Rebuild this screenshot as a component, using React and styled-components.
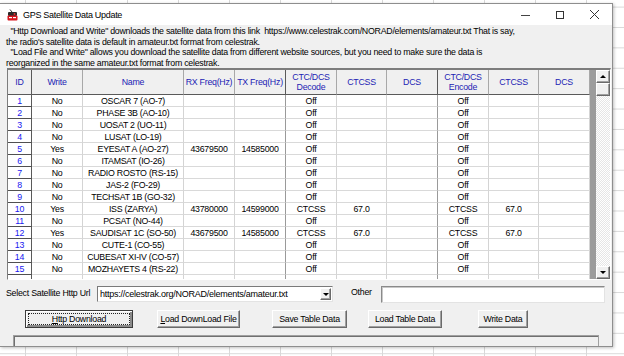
import React from 'react';
import styled, { createGlobalStyle, css } from 'styled-components';

const Global = createGlobalStyle`
  html, body { margin: 0; padding: 0; overflow: hidden; background: #fff; }
  * { box-sizing: border-box; }
`;

const FONT = `"Liberation Sans", Arial, sans-serif`;

const Desktop = styled.div`
  width: 624px;
  height: 356px;
  overflow: hidden;
  padding-top: 3px;
  background-color: #fff;
  background-image:
    linear-gradient(to right, #d9d9d9 1px, transparent 1px),
    linear-gradient(to bottom, #d9d9d9 1px, transparent 1px);
  background-size: 51px 100%, 100% 20.4px;
  background-position: 25px 0, 0 6.6px;
  font-family: ${FONT};
`;

const Window = styled.div`
  width: 613px;
  height: 344px;
  border: 1px solid #8e8e8e;
  border-left: none;
  background: #f0f0f0;
  display: flex;
  flex-direction: column;
  overflow: hidden;
  box-shadow: 1px 1px 3px rgba(0, 0, 0, 0.25);
`;

const TitleBar = styled.div`
  height: 21px;
  flex: none;
  background: #fff;
  display: flex;
  align-items: center;
  padding-left: 7px;
`;

const TitleText = styled.span`
  font-size: 9px;
  letter-spacing: -0.3px;
  color: #000;
  margin-left: 5px;
`;

const Captions = styled.div`
  margin-left: auto;
  display: flex;
  height: 100%;
`;

const CaptionBtn = styled.div`
  width: 34.5px;
  height: 100%;
  display: flex;
  align-items: center;
  justify-content: center;
`;

const Body = styled.div`
  flex: 1;
  display: flex;
  flex-direction: column;
`;

const Description = styled.div`
  padding: 1px 0 0 6px;
  font-size: 8.8px;
  letter-spacing: -0.25px;
  line-height: 10.5px;
  white-space: pre;
  color: #000;
  height: 43px;
`;

const GridFrame = styled.div`
  margin-left: 7px;
  width: 604px;
  height: 212px;
  border-top: 2px solid #7d7d7d;
  border-left: 1px solid #7d7d7d;
  border-right: 1px solid #fff;
  border-bottom: 1px solid #fff;
  display: flex;
`;

const Cells = styled.div`
  width: 582px;
  height: 100%;
  overflow: hidden;
  background: #fff;
  display: grid;
  grid-template-columns: ${(p) => p.$cols};
  grid-template-rows: 25px;
  grid-auto-rows: 12px;
  align-content: start;
`;

const Cell = styled.div`
  display: flex;
  align-items: center;
  justify-content: center;
  text-align: center;
  white-space: pre;
  overflow: hidden;
  font-size: 8.8px;
  letter-spacing: -0.25px;
  color: #000;
  background: #fff;
  border-right: 1px solid ${(p) => (p.$dark ? '#9a9a9a' : '#d4d4d4')};
  border-bottom: 1px solid #d9d9d9;
  ${(p) =>
    p.$head &&
    css`
      background: #f0f0f0;
      color: #2323b4;
      line-height: 10px;
      border-right: 1px solid ${p.$dark ? '#5a5a5a' : '#a8a8a8'};
      border-bottom: 1px solid #5a5a5a;
    `}
  ${(p) =>
    p.$id &&
    css`
      color: #1818f0;
      border-right: 1px solid #5a5a5a;
      border-bottom: 1px solid #505050;
    `}
`;

const Workspace = styled.div`
  width: 6px;
  height: 100%;
  background: #9c9c9c;
`;

const ScrollBar = styled.div`
  width: 14px;
  height: 100%;
  display: flex;
  flex-direction: column;
`;

const raised = css`
  background: #f0f0f0;
  border: 1px solid;
  border-color: #fff #6a6a6a #6a6a6a #fff;
  box-shadow: inset -1px -1px #a0a0a0;
`;

const ScrollBtn = styled.div`
  ${raised};
  height: 13px;
  flex: none;
  display: flex;
  align-items: center;
  justify-content: center;
`;

const Thumb = styled.div`
  ${raised};
  height: 13px;
  flex: none;
`;

const Track = styled.div`
  flex: 1;
  background-color: #fff;
  background-image: repeating-conic-gradient(#e6e6e6 0 25%, #fff 0 50%);
  background-size: 2px 2px;
`;

const Arrow = styled.div`
  width: 0;
  height: 0;
  border-left: 3px solid transparent;
  border-right: 3px solid transparent;
  ${(p) =>
    p.$up
      ? css`border-bottom: 3px solid #000;`
      : css`border-top: 3px solid #000;`}
`;

const UrlRow = styled.div`
  margin-top: 6px;
  height: 17px;
  display: flex;
  align-items: flex-start;
  padding-left: 6px;
`;

const Label = styled.div`
  width: ${(p) => p.$w}px;
  margin-left: ${(p) => p.$ml || 0}px;
  font-size: 8.8px;
  letter-spacing: -0.25px;
  line-height: 12px;
  margin-top: ${(p) => p.$mt || 0}px;
  color: #000;
  white-space: nowrap;
`;

const Combo = styled.div`
  width: 236px;
  height: 16px;
  background: #fff;
  border: 1px solid;
  border-color: #7a7a7a #e3e3e3 #e3e3e3 #7a7a7a;
  display: flex;
  align-items: center;
  padding: 1px 1px 1px 2px;
`;

const ComboText = styled.span`
  flex: 1;
  font-size: 9px;
  letter-spacing: -0.25px;
  color: #000;
  white-space: nowrap;
`;

const ComboBtn = styled.div`
  ${raised};
  width: 11px;
  height: 12px;
  display: flex;
  align-items: center;
  justify-content: center;
`;

const TextBox = styled.div`
  width: 224px;
  height: 17px;
  background: #fff;
  border: 1px solid;
  border-color: #8a8a8a #e3e3e3 #e3e3e3 #8a8a8a;
  box-shadow: inset 1px 1px #c8c8c8;
`;

const ButtonRow = styled.div`
  margin-top: 7px;
  height: 18px;
  display: flex;
  padding-left: 25px;
`;

const Button = styled.div`
  position: relative;
  width: ${(p) => p.$w}px;
  height: 18px;
  margin-left: ${(p) => p.$ml || 0}px;
  ${raised};
  display: flex;
  align-items: center;
  justify-content: center;
  font-size: 8.8px;
  letter-spacing: -0.25px;
  color: #000;
  white-space: nowrap;
  ${(p) =>
    p.$default &&
    css`
      border-color: #3c3c3c;
      box-shadow: inset 1px 1px #fff, inset -2px -2px #8a8a8a;
      &::after {
        content: '';
        position: absolute;
        inset: 2px;
        border: 1px dotted #222;
      }
    `}
  u { text-decoration: underline; text-underline-offset: 1px; }
`;

const Progress = styled.div`
  margin-top: 7px;
  margin-left: 13px;
  width: 586px;
  height: 20px;
  flex: none;
  border: 1px solid #a0a0a0;
  box-shadow: inset 1px 1px #707070;
`;

const cols = [
  { w: 24, h: 'ID', dark: true },
  { w: 51, h: 'Write' },
  { w: 101, h: 'Name' },
  { w: 51, h: 'RX Freq(Hz)' },
  { w: 51, h: 'TX Freq(Hz)', dark: true },
  { w: 51, h: 'CTC/DCS\nDecode' },
  { w: 50, h: 'CTCSS' },
  { w: 51, h: 'DCS', dark: true },
  { w: 51, h: 'CTC/DCS\nEncode' },
  { w: 50, h: 'CTCSS' },
  { w: 51, h: 'DCS' },
];

const rows = [
  ['1', 'No', 'OSCAR 7 (AO-7)', '', '', 'Off', '', '', 'Off', '', ''],
  ['2', 'No', 'PHASE 3B (AO-10)', '', '', 'Off', '', '', 'Off', '', ''],
  ['3', 'No', 'UOSAT 2 (UO-11)', '', '', 'Off', '', '', 'Off', '', ''],
  ['4', 'No', 'LUSAT (LO-19)', '', '', 'Off', '', '', 'Off', '', ''],
  ['5', 'Yes', 'EYESAT A (AO-27)', '43679500', '14585000', 'Off', '', '', 'Off', '', ''],
  ['6', 'No', 'ITAMSAT (IO-26)', '', '', 'Off', '', '', 'Off', '', ''],
  ['7', 'No', 'RADIO ROSTO (RS-15)', '', '', 'Off', '', '', 'Off', '', ''],
  ['8', 'No', 'JAS-2 (FO-29)', '', '', 'Off', '', '', 'Off', '', ''],
  ['9', 'No', 'TECHSAT 1B (GO-32)', '', '', 'Off', '', '', 'Off', '', ''],
  ['10', 'Yes', 'ISS (ZARYA)', '43780000', '14599000', 'CTCSS', '67.0', '', 'CTCSS', '67.0', ''],
  ['11', 'No', 'PCSAT (NO-44)', '', '', 'Off', '', '', 'Off', '', ''],
  ['12', 'Yes', 'SAUDISAT 1C (SO-50)', '43679500', '14585000', 'CTCSS', '67.0', '', 'CTCSS', '67.0', ''],
  ['13', 'No', 'CUTE-1 (CO-55)', '', '', 'Off', '', '', 'Off', '', ''],
  ['14', 'No', 'CUBESAT XI-IV (CO-57)', '', '', 'Off', '', '', 'Off', '', ''],
  ['15', 'No', 'MOZHAYETS 4 (RS-22)', '', '', 'Off', '', '', 'Off', '', ''],
  ['', '', '', '', '', '', '', '', '', '', ''],
];

const AppIcon = () => (
  <svg width="11" height="12" viewBox="0 0 11 12">
    <line x1="3" y1="0.5" x2="5" y2="3" stroke="#333" strokeWidth="1" />
    <rect x="1" y="3" width="9" height="4" rx="1" fill="#2a2a2a" />
    <rect x="0.5" y="6.5" width="10" height="5" rx="1" fill="#d8141c" />
    <rect x="2" y="8" width="3" height="1.2" fill="#fff" />
    <rect x="6" y="8" width="3" height="1.2" fill="#fff" />
    <circle cx="7.5" cy="5" r="1" fill="#e03030" />
  </svg>
);

const MinGlyph = () => (
  <svg width="10" height="10" viewBox="0 0 10 10">
    <line x1="0" y1="5.5" x2="9" y2="5.5" stroke="#444" strokeWidth="1" />
  </svg>
);
const MaxGlyph = () => (
  <svg width="10" height="10" viewBox="0 0 10 10">
    <rect x="1.5" y="1.5" width="7" height="7" fill="none" stroke="#333" strokeWidth="1" />
  </svg>
);
const CloseGlyph = () => (
  <svg width="11" height="11" viewBox="0 0 11 11">
    <path d="M1 1 L10 10 M10 1 L1 10" stroke="#333" strokeWidth="1" fill="none" />
  </svg>
);

export default function App() {
  const colTemplate = cols.map((c) => `${c.w}px`).join(' ');
  return (
    <>
      <Global />
      <Desktop>
        <Window>
          <TitleBar>
            <AppIcon />
            <TitleText>GPS Satellite Data Update</TitleText>
            <Captions>
              <CaptionBtn><MinGlyph /></CaptionBtn>
              <CaptionBtn><MaxGlyph /></CaptionBtn>
              <CaptionBtn><CloseGlyph /></CaptionBtn>
            </Captions>
          </TitleBar>
          <Body>
            <Description>
              {'  "Http Download and Write" downloads the satellite data from this link  https://www.celestrak.com/NORAD/elements/amateur.txt That is say,\n' +
                "the radio's satellite data is default in amateur.txt format from celestrak.\n" +
                '  "Load File and Write" allows you download the satellite data from different website sources, but you need to make sure the data is\n' +
                'reorganized in the same amateur.txt format from celestrak.'}
            </Description>
            <GridFrame>
              <Cells $cols={colTemplate}>
                {cols.map((c, i) => (
                  <Cell key={'h' + i} $head $dark={c.dark}>{c.h}</Cell>
                ))}
                {rows.map((r, ri) =>
                  r.map((v, ci) => (
                    <Cell key={ri + '-' + ci} $id={ci === 0} $dark={cols[ci].dark}>
                      {v}
                    </Cell>
                  ))
                )}
              </Cells>
              <Workspace />
              <ScrollBar>
                <ScrollBtn><Arrow $up /></ScrollBtn>
                <Thumb />
                <Track />
                <ScrollBtn><Arrow /></ScrollBtn>
              </ScrollBar>
            </GridFrame>
            <UrlRow>
              <Label $w={91} $mt={1}>Select Satellite Http Url</Label>
              <Combo>
                <ComboText>https://celestrak.org/NORAD/elements/amateur.txt</ComboText>
                <ComboBtn><Arrow /></ComboBtn>
              </Combo>
              <Label $w={30} $ml={18}>Other</Label>
              <TextBox />
            </UrlRow>
            <ButtonRow>
              <Button $w={108} $default><span><u>H</u>ttp Download</span></Button>
              <Button $w={83} $ml={24}><span><u>L</u>oad DownLoad File</span></Button>
              <Button $w={75} $ml={32}>Save Table Data</Button>
              <Button $w={74} $ml={21}>Load Table Data</Button>
              <Button $w={50} $ml={36}>Write Data</Button>
            </ButtonRow>
            <Progress />
          </Body>
        </Window>
      </Desktop>
    </>
  );
}
